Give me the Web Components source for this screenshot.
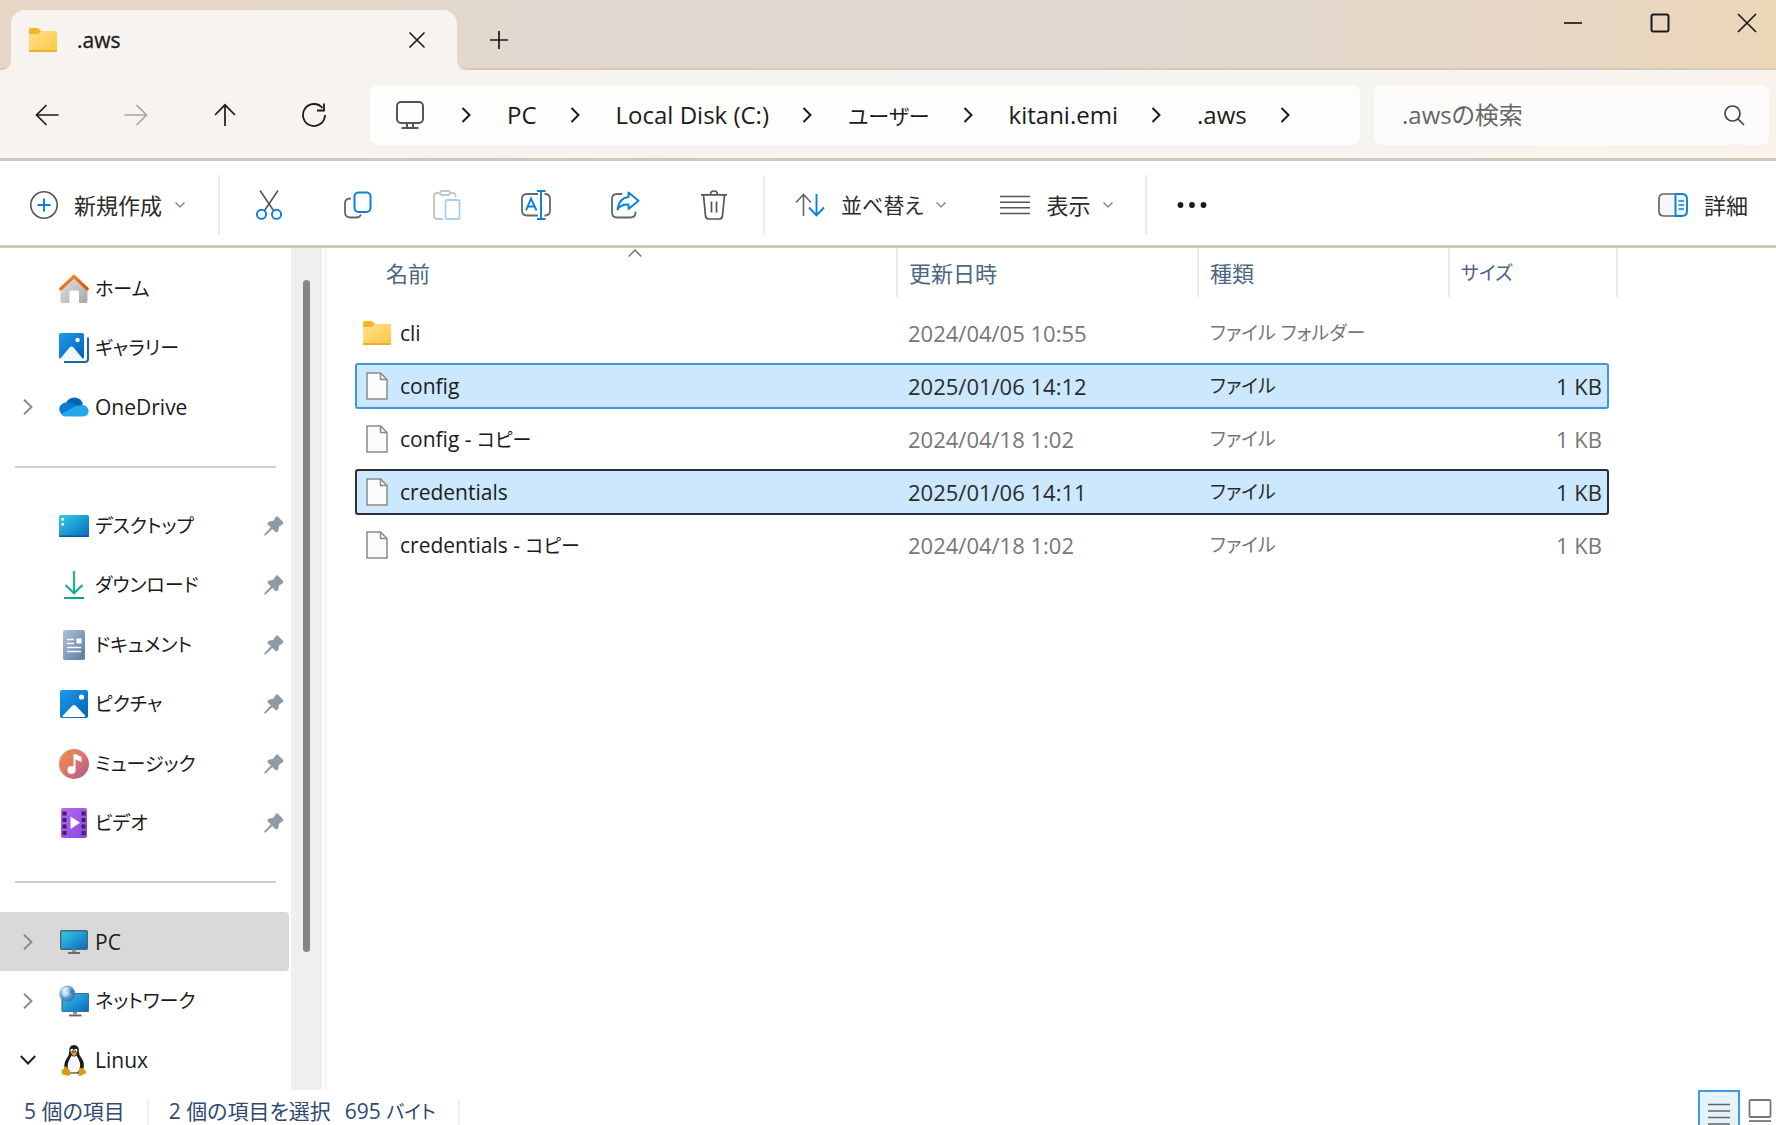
<!DOCTYPE html>
<html lang="ja">
<head>
<meta charset="utf-8">
<title>.aws</title>
<style>
html,body{margin:0;height:100%}
body{font-family:"Open Sans","Noto Sans CJK JP",sans-serif;font-size:22px;line-height:30px;color:#1b1b1b;background:#fff;overflow:hidden;font-feature-settings:"palt"}
</style>
</head>
<body>
<explorer-window></explorer-window>
<script>
const RESET = `*{box-sizing:border-box}button{font:inherit;color:inherit;background:none;border:0;padding:0;margin:0;display:flex;align-items:center;justify-content:center;font-feature-settings:inherit}a{color:inherit;text-decoration:none}.kana{font-size:19px}`;

/* Katakana runs are set one step smaller than the Latin text beside them. */
const kana = text => text.replace(/[\u30a0-\u30ff]+/g, '<span class="kana">$&</span>');

class BaseElement extends HTMLElement {
  mount(css, html) {
    const t = document.createElement('template');
    t.innerHTML = `<style>${RESET}${css}</style>${html}`;
    this.attachShadow({mode: 'open'}).append(t.content.cloneNode(true));
  }
}

/* name: [width, height, markup]; stroke icons inherit currentColor */
const ICONS = {
  folder: [28, 24, `<defs><linearGradient id="g" x1="0" y1="0" x2="1" y2="1"><stop offset="0" stop-color="#ffe093"/><stop offset="1" stop-color="#fec83f"/></linearGradient></defs><path d="M0 2Q0 0 2 0H8Q9 0 10 1L12 3H26Q28 3 28 5V10H0Z" fill="#f8b625"/><path d="M0 7Q0 6 1 6H9L12 3H26Q28 3 28 5V22Q28 23 27 23H1Q0 23 0 22Z" fill="url(#g)"/><path d="M0 22H28V23Q28 24 27 24H1Q0 24 0 23Z" fill="#efae2c"/>`],
  close: [18, 18, `<path d="M1.5 1.5 16.5 16.5M16.5 1.5 1.5 16.5" stroke="currentColor" stroke-width="1.6"/>`],
  plus: [20, 20, `<path d="M10 1V19M1 10H19" stroke="currentColor" stroke-width="1.7"/>`],
  min: [20, 20, `<path d="M1 10H19" stroke="currentColor" stroke-width="1.7"/>`],
  max: [20, 20, `<rect x="1.5" y="1.5" width="17" height="17" rx="2" stroke="currentColor" stroke-width="2"/>`],
  winclose: [20, 20, `<path d="M1 1 19 19M19 1 1 19" stroke="currentColor" stroke-width="1.7"/>`],
  back: [24, 22, `<path d="M23.500 11H1.500M11.500 1 1.500 11 11.500 21" stroke="currentColor" stroke-width="1.700"/>`],
  forward: [24, 22, `<path d="M.5 11H22.500M12.500 1 22.500 11 12.500 21" stroke="currentColor" stroke-width="1.700"/>`],
  up: [22, 24, `<path d="M11 23V2M1 12 11 1.800 21 12" stroke="currentColor" stroke-width="1.700"/>`],
  refresh: [24, 24, `<path d="M23 12A11 11 0 1 1 20.500 5" stroke="currentColor" stroke-width="1.800"/><path d="M22 .5V7.500H15" stroke="currentColor" stroke-width="1.800"/>`],
  monitor: [28, 28, `<rect x="1" y="1" width="26" height="21" rx="4" stroke="#555" stroke-width="2"/><path d="M11 22V26M17 22V26M5.500 27H22.500" stroke="#555" stroke-width="2"/>`],
  chev: [10, 16, `<path d="M1.500 1 8.500 8 1.500 15" stroke="currentColor" stroke-width="2"/>`],
  treechev: [10, 16, `<path d="M1 .8 8.500 8 1 15.200" stroke="currentColor" stroke-width="1.900"/>`],
  treeopen: [16, 10, `<path d="M.8 1 8 8.500 15.200 1" stroke="currentColor" stroke-width="2"/>`],
  down: [10, 6, `<path d="M.5.500 5 5 9.500.500" stroke="currentColor" stroke-width="1.200"/>`],
  sortup: [14, 8, `<path d="M.7 7.500 7 1 13.300 7.500" stroke="currentColor" stroke-width="1.500"/>`],
  search: [21, 21, `<circle cx="8.500" cy="8.500" r="7.500" stroke="currentColor" stroke-width="1.700"/><path d="M13.800 13.800 20 20" stroke="currentColor" stroke-width="1.700"/>`],
  newitem: [28, 28, `<circle cx="14" cy="14" r="13.200" stroke="#555" stroke-width="1.600"/><path d="M14 7.500V20.500M7.500 14H20.500" stroke="#0a7fdc" stroke-width="1.900"/>`],
  cut: [26, 30, `<path d="M4 .5 17.500 20.500M22 .5 8.500 20.500" stroke="#555" stroke-width="1.600"/><circle cx="5.500" cy="24.300" r="4.600" stroke="#0a7fdc" stroke-width="1.900"/><circle cx="20.500" cy="24.300" r="4.600" stroke="#0a7fdc" stroke-width="1.900"/>`],
  copy: [28, 28, `<path d="M7 7.500H6Q1 7.500 1 12.500V21Q1 26.500 6.500 26.500H12Q16 26.500 17 23.500" stroke="#666" stroke-width="1.800"/><rect x="10.500" y="1.500" width="16" height="19.500" rx="4" stroke="#0a7fdc" stroke-width="2"/>`],
  paste: [28, 30, `<path d="M6 3H4Q1 3 1 6V26.500Q1 29 4 29H10M17 3H20Q22.500 3 22.500 6V7" stroke="#c4c4c4" stroke-width="1.800"/><rect x="7" y="1" width="10" height="4" rx="2" stroke="#c4c4c4" stroke-width="1.800"/><rect x="12.500" y="10" width="14" height="19" rx="2" stroke="#a3d1f1" stroke-width="1.800"/>`],
  rename: [30, 30, `<path d="M17 4H6Q1 4 1 9V20.500Q1 25.500 6 25.500H17M23.500 4H24Q29 4 29 9V20.500Q29 25.500 24 25.500H23.500" stroke="#666" stroke-width="1.800"/><path d="M5 20.500 10 8.500 15.500 20.500M7 16.500H13.500" stroke="#0a7fdc" stroke-width="1.900"/><path d="M20 1V29M16 1H24.500M16 29H24.500" stroke="#0a7fdc" stroke-width="1.900"/>`],
  share: [29, 28, `<path d="M11 3H6Q1 3 1 8V21.500Q1 26.500 6 26.500H19.500Q24.500 26.500 24.500 21.500V20.500" stroke="#666" stroke-width="1.800"/><path d="M17.500 1.500 27.500 9.800 17.500 18V13.500Q10 13 6.500 18.500Q8 7 17.500 6Z" stroke="#0a7fdc" stroke-width="1.900" stroke-linejoin="round"/>`],
  trash: [28, 30, `<path d="M1 4.800H27M10.500 4.500Q10.500 1 14 1T17.500 4.500M3.500 5 5.500 26Q6 29 9 29H19Q22 29 22.500 26L24.500 5M11.500 11.500V22.500M16.500 11.500V22.500" stroke="#555" stroke-width="1.700"/>`],
  sort: [30, 24, `<path d="M8.500 23V2M1 9.500 8.500 1.500 16 9.500" stroke="#666" stroke-width="1.600"/><path d="M21.500 1V22M14 14.500 21.500 22.300 29 14.500" stroke="#0a7fdc" stroke-width="1.900"/>`],
  lines: [30, 20, `<path d="M0 1.500H30M0 7.200H30M0 12.800H30M0 18.500H30" stroke="#555" stroke-width="1.600"/>`],
  dots: [30, 6, `<g fill="#1b1b1b"><circle cx="3.500" cy="3" r="2.900"/><circle cx="15" cy="3" r="2.900"/><circle cx="26.500" cy="3" r="2.900"/></g>`],
  details: [30, 24, `<path d="M17 1H6Q1 1 1 6V18Q1 23 6 23H17" stroke="#666" stroke-width="1.700" fill="#f6f6f6"/><path d="M17.500 1H24Q29 1 29 6V18Q29 23 24 23H17.500Z" stroke="#0a7fdc" stroke-width="1.900" fill="#eef8ff"/><path d="M20.500 8H26M20.500 12H26M20.500 16H26" stroke="#0a7fdc" stroke-width="1.600"/>`],
  home: [30, 30, `<defs><linearGradient id="g" x1="0" y1="0" x2="1" y2="1"><stop offset="0" stop-color="#e4e4e4"/><stop offset="1" stop-color="#a6a6a6"/></linearGradient><linearGradient id="h" x1="0" y1="0" x2="1" y2="1"><stop offset="0" stop-color="#f6901e"/><stop offset="1" stop-color="#d8510e"/></linearGradient></defs><path d="M1.500 14.500 15 2.500 28.500 14.500V27Q28.500 29 26.500 29H20V18Q20 16.500 18.500 16.500H12Q10.500 16.500 10.500 18V29H3.500Q1.500 29 1.500 27Z" fill="url(#g)"/><path d="M1.800 14.800 15 2.300 28.200 14.800" stroke="url(#h)" stroke-width="3.200" stroke-linecap="round" stroke-linejoin="round"/>`],
  gallery: [30, 30, `<defs><linearGradient id="g" x1="0" y1="0" x2="1" y2="1"><stop offset="0" stop-color="#1d9bec"/><stop offset="1" stop-color="#0561b4"/></linearGradient></defs><path d="M5 29H26Q29 29 29 26V4.500" stroke="#1068ad" stroke-width="2"/><rect width="25" height="26" rx="2" fill="url(#g)"/><path d="M1 26 10.500 14.500Q12.500 12.500 14.500 14.500L24 26Z" fill="#eef7ff"/><circle cx="18.500" cy="7" r="2.200" fill="#fff"/>`],
  onedrive: [30, 20, `<path d="M6 8Q8 1 15 .5 22 .5 24 7L16 13Z" fill="#0a62b7"/><path d="M9 5.500Q2 5 .3 11 0 16 4 18L20 10Q15 6 9 5.500Z" fill="#0b7cd4"/><path d="M20 8.500Q24 6.500 27.500 9.500 30.500 12.500 29.300 16 28 19.300 24 19.500H7Q3.500 19.500 2 17L16 9.500Q18 8.300 20 8.500Z" fill="#27a5ea"/>`],
  desktop: [30, 22, `<defs><linearGradient id="g" x1="0" y1="0" x2="1" y2="1"><stop offset="0" stop-color="#32cfe4"/><stop offset="1" stop-color="#0a67c1"/></linearGradient></defs><rect width="30" height="22" rx="1.500" fill="url(#g)"/><path d="M0 20.500H30V21Q30 22 29 22H1Q0 22 0 21Z" fill="#0b579e"/><rect x="2.500" y="3" width="2.500" height="2.500" fill="#fff"/><rect x="2.500" y="8" width="2.500" height="2.500" fill="#fff"/>`],
  download: [20, 28, `<defs><linearGradient id="g" gradientUnits="userSpaceOnUse" x1="0" y1="0" x2="20" y2="28"><stop offset="0" stop-color="#2cc296"/><stop offset="1" stop-color="#0f9f8c"/></linearGradient></defs><path d="M10 0V22M1.500 14 10 22.300 18.500 14M0 27H20" stroke="url(#g)" stroke-width="2.200"/>`],
  document: [22, 30, `<defs><linearGradient id="g" x1="0" y1="0" x2="1" y2="1"><stop offset="0" stop-color="#b0c2d6"/><stop offset="1" stop-color="#587aa4"/></linearGradient></defs><rect width="22" height="30" rx="1.800" fill="url(#g)"/><path d="M4 9.500H11M4 13.500H11M4 17.500H18M4 21.500H18" stroke="#fff" stroke-width="1.600"/><rect x="13.500" y="8.500" width="5" height="5" fill="#fff"/>`],
  picture: [28, 28, `<defs><linearGradient id="g" x1="0" y1="0" x2="1" y2="1"><stop offset="0" stop-color="#1a9aec"/><stop offset="1" stop-color="#0562b6"/></linearGradient></defs><rect width="28" height="28" rx="2" fill="url(#g)"/><path d="M2.500 26 12 16Q14 14 16 16L25.500 26Q25 27 24 27H4Q3 27 2.500 26Z" fill="#fff"/><circle cx="21.500" cy="7" r="2.600" fill="#fff"/>`],
  music: [30, 30, `<defs><linearGradient id="g" x1="0" y1="0" x2="1" y2="1"><stop offset="0" stop-color="#f0934d"/><stop offset=".5" stop-color="#dd7568"/><stop offset="1" stop-color="#a7599f"/></linearGradient></defs><circle cx="15" cy="15" r="15" fill="url(#g)"/><circle cx="12.500" cy="21" r="4" fill="#fff"/><path d="M14.500 5H16.500L22.500 8V13L16.500 10.500V21H14.500Z" fill="#fff"/>`],
  video: [26, 30, `<defs><linearGradient id="g" x1="0" y1="0" x2="1" y2="1"><stop offset="0" stop-color="#b56af3"/><stop offset="1" stop-color="#8a45dc"/></linearGradient></defs><rect width="26" height="30" rx="2" fill="url(#g)"/><g fill="#3b2468"><rect x="1.500" y="3.500" width="4" height="4"/><rect x="1.500" y="10" width="4" height="4"/><rect x="1.500" y="16.500" width="4" height="4"/><rect x="1.500" y="23" width="4" height="4"/><rect x="20.500" y="3.500" width="4" height="4"/><rect x="20.500" y="10" width="4" height="4"/><rect x="20.500" y="16.500" width="4" height="4"/><rect x="20.500" y="23" width="4" height="4"/></g><path d="M9.500 8.500 19 14.800 9.500 21Z" fill="#fff"/>`],
  pc: [28, 24, `<defs><linearGradient id="g" x1="0" y1="0" x2="1" y2="1"><stop offset="0" stop-color="#34d0e5"/><stop offset="1" stop-color="#0a68c4"/></linearGradient></defs><rect x=".7" y=".7" width="26.600" height="18.600" rx="1" fill="url(#g)" stroke="#4d6673" stroke-width="1.400"/><path d="M12 19.500H16V22H12Z" fill="#8a959b"/><path d="M8 23H20" stroke="#59646a" stroke-width="1.800"/>`],
  network: [30, 32, `<defs><linearGradient id="g" x1="0" y1="0" x2="1" y2="1"><stop offset="0" stop-color="#34c6e5"/><stop offset="1" stop-color="#0a68c4"/></linearGradient><radialGradient id="h" cx=".35" cy=".3" r=".8"><stop offset="0" stop-color="#cfe8fa"/><stop offset=".5" stop-color="#6fa9dc"/><stop offset="1" stop-color="#2a62a6"/></radialGradient></defs><rect x="3" y="8.500" width="26.500" height="18" rx="1" fill="url(#g)" stroke="#3c7187" stroke-width="1.200"/><path d="M14 27H18V29.500H14Z" fill="#8a959b"/><path d="M10 30.500H22.500" stroke="#59646a" stroke-width="1.800"/><circle cx="8.300" cy="8.500" r="8" fill="url(#h)"/><path d="M3 5Q6 1.500 9 3L7.500 6.500 10 8.500 7 12 4 10.500Z" fill="#e4f3fc" opacity=".65"/><path d="M11 3.500 15 6 14 10 11.500 8Z" fill="#2f6fb4" opacity=".7"/>`],
  linux: [26, 31, `<path d="M13 0Q18 0 17.800 6 17.700 9.500 20.500 13 24 18 22.500 24L18 28.500H8L3.500 24Q2.500 18 6 13 8.500 9.500 8.300 6 8 0 13 0Z" fill="#1b1b1b"/><path d="M10.500 10.500Q13 12.500 15.500 10.500 18 14 19 18 20 25 16 27.500H10Q5.500 24 7 18 8.500 14 10.500 10.500Z" fill="#f7f7f7"/><ellipse cx="11" cy="5.800" rx="1.600" ry="2" fill="#fff"/><ellipse cx="14.800" cy="5.800" rx="1.600" ry="2" fill="#fff"/><circle cx="11.300" cy="6.200" r=".8" fill="#111"/><circle cx="14.500" cy="6.200" r=".8" fill="#111"/><path d="M9.800 8.800 13 7.300 16.300 8.800 13 11.200Z" fill="#e99b20"/><path d="M3.500 21.500Q5.500 21 7 23.500L10 27.500Q10 30.500 7 30.800L1.500 29.500Q0 29 .8 27L.8 24.500 3 24Z" fill="#d99b12"/><path d="M18.500 22.500Q20 24 22.500 22.500L23.500 25 25.500 27Q25.500 28 23 29.300L19.500 31Q17 31 17 28.500Z" fill="#d99b12"/>`],
  pin: [20, 20, `<path d="M12 .7Q13-.2 14 .7L19 6Q19.800 7.200 18.600 8.200L15 10.800 14.400 14.600Q13.300 17.400 11.200 15.700L8.300 12.900 1.500 19.500H.3V18.300L6.800 11.300 3.600 8.200Q3 6 5.600 5.500L9.300 4.700Z" fill="#8f9ba3"/>`],
  file: [22, 28, `<path d="M1 1H14.500L21 7.500V27H1Z" fill="#fbfbfb" stroke="#8a8a8a" stroke-width="1.500"/><path d="M14.500 1V7.500H21" stroke="#8a8a8a" stroke-width="1.500"/>`],
  listview: [24, 23, `<path d="M1 1.500H23M1 8H23M1 14.500H23M1 21H23" stroke="#666" stroke-width="1.700"/>`],
  tileview: [24, 24, `<rect x="1.500" y="1" width="21" height="17" rx="1" stroke="#777" stroke-width="1.800"/><path d="M1 22H23" stroke="#777" stroke-width="1.800"/>`]
};

customElements.define('ui-icon', class extends BaseElement {
  connectedCallback() {
    const [w, h, body] = ICONS[this.getAttribute('name')];
    this.mount(`:host{display:block;flex:none;width:${w}px;height:${h}px}svg{display:block}`,
      `<svg width="${w}" height="${h}" viewBox="0 0 ${w} ${h}" fill="none" aria-hidden="true">${body}</svg>`);
  }
});

customElements.define('title-bar', class extends BaseElement {
  connectedCallback() {
    this.mount(`
:host{display:flex;align-items:flex-end;height:70px;flex:none;padding-left:11px;background:linear-gradient(90deg,#e9d5c4 0,#e7d7ca 12%,#e0d8cf 32%,#dfd8d0 62%,#e5d7c8 82%,#ead6c0 93%,#ecd6b7 100%);box-shadow:inset 0 -2px #d6c7b9}
.tab{position:relative;display:flex;align-items:center;width:446px;height:60px;padding:0 31px 0 18px;background:#f7f3ef;border-radius:14px 14px 0 0}
.tab::before,.tab::after{content:"";position:absolute;bottom:0;width:8px;height:8px}
.tab::before{left:-8px;background:radial-gradient(circle at 0 0,transparent 7px,#f7f3ef 8px)}
.tab::after{right:-8px;background:radial-gradient(circle at 100% 0,transparent 7px,#f7f3ef 8px)}
.name{flex:1;padding-left:20px;font-size:21px;-webkit-text-stroke:.3px}
.add{width:44px;height:60px;margin-left:20px}
.controls{display:flex;gap:29px;margin-left:auto;align-self:flex-start}
.controls button{width:58px;height:46px}`,
`<div class="tab"><ui-icon name="folder"></ui-icon><span class="name">.aws</span><button aria-label="タブを閉じる"><ui-icon name="close"></ui-icon></button></div>
<button class="add" aria-label="新しいタブ"><ui-icon name="plus"></ui-icon></button>
<div class="controls"><button aria-label="最小化"><ui-icon name="min"></ui-icon></button><button aria-label="最大化"><ui-icon name="max"></ui-icon></button><button aria-label="閉じる"><ui-icon name="winclose"></ui-icon></button></div>`);
  }
});

customElements.define('address-bar', class extends BaseElement {
  connectedCallback() {
    const crumbs = this.getAttribute('path').split('|');
    this.mount(`
:host{display:flex;min-width:0;height:60px;padding-left:26px;background:#fdfdfb;border-radius:8px;font-size:24px}
.kana{font-size:21px}
ol{display:flex;align-items:center;list-style:none;margin:0;padding:0}
li{display:flex;align-items:center;white-space:nowrap}
ui-icon[name=chev]{margin:0 36px 0 33px}
.device ui-icon[name=chev]{margin-left:37px}`,
`<ol><li class="device"><ui-icon name="monitor"></ui-icon><ui-icon name="chev"></ui-icon></li>${crumbs.map(c => `<li><a href="#">${kana(c)}</a><ui-icon name="chev"></ui-icon></li>`).join('')}</ol>`);
  }
});

customElements.define('nav-bar', class extends BaseElement {
  connectedCallback() {
    this.mount(`
:host{display:flex;flex:none;align-items:center;height:91px;padding:2px 7px 0 25px;background:linear-gradient(90deg,#f7f3ef 0,#f7f3ef 20%,#f5f4f1 45%,#f6f4f0 75%,#f9f3ec 100%);border-bottom:3px solid #d6c8b8}
.buttons{display:flex;gap:45px;margin-right:34px}
.buttons button{width:44px;height:44px}
.buttons button:disabled{color:#a8a6a4}
address-bar{flex:1}
.search{flex:0 1 395px;display:flex;align-items:center;min-width:0;height:60px;margin-left:14px;padding:0 24px 0 28px;background:#fefcfa;border-radius:8px;color:#444}
input{flex:1;min-width:0;border:0;padding:0;outline:0;background:none;font:inherit;font-size:24px;font-feature-settings:inherit;color:#666}
input::placeholder{color:#666;opacity:1}`,
`<div class="buttons"><button aria-label="戻る"><ui-icon name="back"></ui-icon></button><button aria-label="進む" disabled><ui-icon name="forward"></ui-icon></button><button aria-label="上へ"><ui-icon name="up"></ui-icon></button><button aria-label="更新"><ui-icon name="refresh"></ui-icon></button></div>
<address-bar path="PC|Local Disk (C:)|ユーザー|kitani.emi|.aws"></address-bar>
<label class="search"><input type="search" placeholder=".awsの検索" aria-label=".awsの検索"><ui-icon name="search"></ui-icon></label>`);
  }
});

customElements.define('command-bar', class extends BaseElement {
  connectedCallback() {
    this.mount(`
:host{display:flex;flex:none;align-items:center;height:87px;padding:3px 28px 0 30px;border-bottom:3px solid #d6c8b8;background:#fff;white-space:nowrap;color:#2b2b2b}
.menu ui-icon[name=down]{margin-left:13px;color:#777}
.menu>ui-icon:first-child,.details>ui-icon{margin-right:16px}
.sep{width:2px;height:60px;background:#ececec}
.tools{display:flex;gap:45px;padding:0 27px}
.tools button{width:44px;height:44px}
.group{display:flex;gap:54px;padding:0 32px 0 30px}
.menu.sort{font-size:21px}
.more{width:44px;height:44px;margin-left:23px}
.first{margin-right:33px}
.details{margin-left:auto}`,
`<button class="menu first"><ui-icon name="newitem"></ui-icon>新規作成<ui-icon name="down"></ui-icon></button>
<span class="sep"></span>
<div class="tools"><button aria-label="切り取り"><ui-icon name="cut"></ui-icon></button><button aria-label="コピー"><ui-icon name="copy"></ui-icon></button><button aria-label="貼り付け" disabled><ui-icon name="paste"></ui-icon></button><button aria-label="名前の変更"><ui-icon name="rename"></ui-icon></button><button aria-label="共有"><ui-icon name="share"></ui-icon></button><button aria-label="削除"><ui-icon name="trash"></ui-icon></button></div>
<span class="sep"></span>
<div class="group"><button class="menu sort"><ui-icon name="sort"></ui-icon>並べ替え<ui-icon name="down"></ui-icon></button><button class="menu"><ui-icon name="lines"></ui-icon>表示<ui-icon name="down"></ui-icon></button></div>
<span class="sep"></span>
<button class="more" aria-label="もっと見る"><ui-icon name="dots"></ui-icon></button>
<button class="details"><ui-icon name="details"></ui-icon>詳細</button>`);
  }
});

customElements.define('nav-item', class extends BaseElement {
  connectedCallback() {
    const tree = this.getAttribute('tree');
    this.mount(`
:host{display:flex;min-height:40px}
a{flex:1;display:grid;grid-template-columns:56px 36px 1fr 25px;align-items:center;border-radius:0 4px 4px 0;white-space:nowrap}
:host([current]) a{background:#d9d9d9}
.tree,.icon{display:flex;justify-content:center}
.tree{color:#8a8a8a}
.open{color:#222}
.label{padding-left:3px;font-size:21px}
.label.kana{font-size:19px}`,
`<a href="#"><span class="tree ${tree === 'treeopen' ? 'open' : ''}">${tree ? `<ui-icon name="${tree}"></ui-icon>` : ''}</span><span class="icon"><ui-icon name="${this.getAttribute('icon')}"></ui-icon></span><span class="label ${/[\u30a0-\u30ff]/.test(this.textContent) ? 'kana' : ''}"><slot></slot></span>${this.hasAttribute('pinned') ? '<ui-icon name="pin"></ui-icon>' : ''}</a>`);
  }
});

customElements.define('side-nav', class extends BaseElement {
  connectedCallback() {
    this.mount(`
:host{display:flex;flex:none;width:327px;border-right:3px solid #f7f7f7}
nav{flex:1;display:flex;flex-direction:column;padding:11px 2px 0 0}
nav>*{flex:1 1 0}
.rule{display:flex;align-items:center;padding:0 13px 0 15px}
hr{flex:1;margin:0;border:0;height:2px;background:#cfcfcf}
.track{display:flex;flex-direction:column;align-items:center;width:31px;margin-right:2px;padding:32px 0 0;background:#efefef}
.thumb{width:7px;height:83%;border-radius:4px;background:#858585}`,
`<nav aria-label="ナビゲーション">
<nav-item icon="home">ホーム</nav-item>
<nav-item icon="gallery">ギャラリー</nav-item>
<nav-item icon="onedrive" tree="treechev">OneDrive</nav-item>
<div class="rule"><hr></div>
<nav-item icon="desktop" pinned>デスクトップ</nav-item>
<nav-item icon="download" pinned>ダウンロード</nav-item>
<nav-item icon="document" pinned>ドキュメント</nav-item>
<nav-item icon="picture" pinned>ピクチャ</nav-item>
<nav-item icon="music" pinned>ミュージック</nav-item>
<nav-item icon="video" pinned>ビデオ</nav-item>
<div class="rule"><hr></div>
<nav-item icon="pc" tree="treechev" current>PC</nav-item>
<nav-item icon="network" tree="treechev">ネットワーク</nav-item>
<nav-item icon="linux" tree="treeopen">Linux</nav-item>
</nav><div class="track"><div class="thumb"></div></div>`);
  }
});

const FILES = [
  {name: 'cli', date: '2024/04/05 10:55', type: 'ファイル フォルダー', size: '', icon: 'folder'},
  {name: 'config', date: '2025/01/06 14:12', type: 'ファイル', size: '1 KB', icon: 'file', state: 'selected'},
  {name: 'config - コピー', date: '2024/04/18 1:02', type: 'ファイル', size: '1 KB', icon: 'file'},
  {name: 'credentials', date: '2025/01/06 14:11', type: 'ファイル', size: '1 KB', icon: 'file', state: 'selected focused'},
  {name: 'credentials - コピー', date: '2024/04/18 1:02', type: 'ファイル', size: '1 KB', icon: 'file'}
];

customElements.define('file-list', class extends BaseElement {
  connectedCallback() {
    this.mount(`
:host{display:block;flex:1;min-width:0;padding-left:28px}
table,thead,tbody{display:block}
tr{display:grid;grid-template-columns:543px 301px 251px 168px;width:max-content}
thead tr{height:49px;margin-bottom:13px}
th{position:relative;display:flex;align-items:center;padding-left:11px;border-right:2px solid #e9e9e9;font-weight:400;color:#4c6784}
th:first-child{padding-left:31px}
th ui-icon{position:absolute;left:273px;top:1px;color:#777}
tbody tr{grid-template-columns:542px 302px 252px 154px;height:46px;margin-bottom:7px;border:2px solid transparent;border-radius:3px;color:#777}
td{display:flex;align-items:center;padding:0 0 0 11px;white-space:nowrap;margin-left:-2px}
td:first-child{padding-left:8px;color:#1b1b1b;font-size:21px}
td:last-child{justify-content:flex-end;padding-right:5px}
.icon{display:flex;justify-content:center;width:28px;margin-right:9px}
.selected{background:#cce8ff;border-color:#3c97dd;color:#2b2b2b}
.focused{border-color:#2b2f33}`,
`<table><thead><tr><th>名前<ui-icon name="sortup"></ui-icon></th><th>更新日時</th><th>種類</th><th>${kana('サイズ')}</th></tr></thead>
<tbody>${FILES.map(f => `<tr class="${f.state || ''}"><td><span class="icon"><ui-icon name="${f.icon}"></ui-icon></span><span>${kana(f.name)}</span></td><td>${f.date}</td><td><span class="kana">${f.type}</span></td><td>${f.size}</td></tr>`).join('')}</tbody></table>`);
  }
});

customElements.define('status-bar', class extends BaseElement {
  connectedCallback() {
    this.mount(`
:host{display:flex;flex:none;height:35px;padding-left:24px;font-size:21px;line-height:26px;color:#2f4a73;overflow:hidden;white-space:nowrap}
.text{padding-top:8px}
.sep{width:2px;margin:10px 20px 0 22px;background:#efefef}
.bytes{margin-left:14px}
.views{display:flex;margin-left:auto}
button{align-items:flex-start;height:44px;padding-top:9px}
.on{width:42px;padding-top:11px;border:2px solid #3f9be8;background:#e5f3fb}
.tile{padding-left:8px;padding-right:4px}`,
`<span class="text">5 個の項目</span><span class="sep"></span><span class="text">2 個の項目を選択</span><span class="text bytes">695 ${kana('バイト')}</span><span class="sep"></span>
<div class="views"><button class="on" aria-label="詳細表示"><ui-icon name="listview"></ui-icon></button><button class="tile" aria-label="大アイコン表示"><ui-icon name="tileview"></ui-icon></button></div>`);
  }
});

customElements.define('explorer-window', class extends BaseElement {
  connectedCallback() {
    this.mount(`
:host{display:flex;flex-direction:column;height:100vh}
main{flex:1;display:flex;min-height:0}`,
`<title-bar></title-bar><nav-bar></nav-bar><command-bar></command-bar><main><side-nav></side-nav><file-list></file-list></main><status-bar></status-bar>`);
  }
});
</script>
</body>
</html>
